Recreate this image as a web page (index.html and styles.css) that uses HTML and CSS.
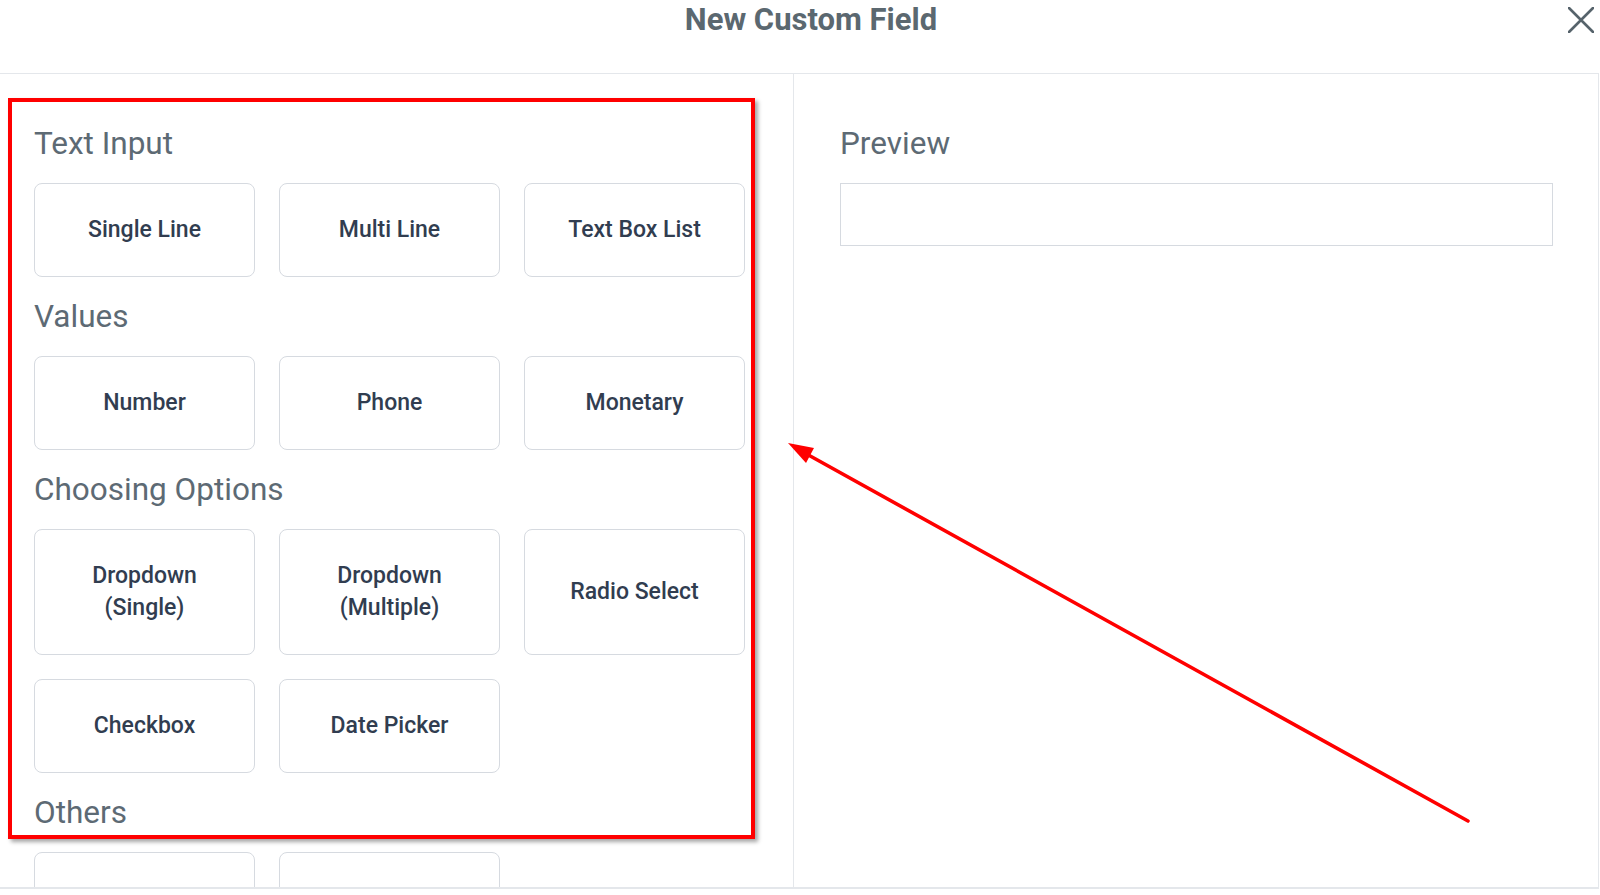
FILE: index.html
```html
<!DOCTYPE html>
<html lang="en">
<head>
<meta charset="utf-8">
<title>New Custom Field</title>
<link rel="stylesheet" href="styles.css">
</head>
<body>
<div class="modal">
  <header class="modal-header">
    <h1 class="modal-title">New Custom Field</h1>
    <button class="close-btn" aria-label="Close">
      <svg width="26" height="26" viewBox="0 0 26 26"><path d="M1 1 L25 25 M25 1 L1 25" stroke="#56636b" stroke-width="2.6" fill="none" stroke-linecap="round"/></svg>
    </button>
  </header>
  <div class="modal-body">
    <section class="types-panel">
      <h2 class="section-title">Text Input</h2>
      <div class="type-grid">
        <div class="type-btn">Single Line</div>
        <div class="type-btn">Multi Line</div>
        <div class="type-btn">Text Box List</div>
      </div>
      <h2 class="section-title">Values</h2>
      <div class="type-grid">
        <div class="type-btn">Number</div>
        <div class="type-btn">Phone</div>
        <div class="type-btn">Monetary</div>
      </div>
      <h2 class="section-title">Choosing Options</h2>
      <div class="type-grid">
        <div class="type-btn">Dropdown<br>(Single)</div>
        <div class="type-btn">Dropdown<br>(Multiple)</div>
        <div class="type-btn">Radio Select</div>
        <div class="type-btn">Checkbox</div>
        <div class="type-btn">Date Picker</div>
      </div>
      <h2 class="section-title">Others</h2>
      <div class="type-grid">
        <div class="type-btn type-btn-empty"></div>
        <div class="type-btn type-btn-empty"></div>
      </div>
    </section>
    <section class="preview-panel">
      <h2 class="section-title">Preview</h2>
      <div class="preview-box"></div>
    </section>
  </div>
</div>
<div class="highlight-box"></div>
<svg class="arrow-overlay" width="1600" height="895" viewBox="0 0 1600 895">
  <line x1="1468" y1="821" x2="803" y2="452" stroke="#ff0000" stroke-width="3.6" stroke-linecap="round"/>
  <polygon points="788,443 806,463 814,448" fill="#ff0000"/>
</svg>
</body>
</html>
```
FILE: styles.css
```css
* { box-sizing: border-box; }
html, body { margin: 0; padding: 0; background: #ffffff; }
body {
  font-family: Roboto, "Liberation Sans", Arial, sans-serif;
  width: 1600px;
  height: 895px;
  overflow: hidden;
  position: relative;
}
.modal { width: 1599px; }
.modal-header {
  position: relative;
  height: 74px;
  border-bottom: 1px solid #e4e7eb;
  display: flex;
  justify-content: center;
  align-items: flex-start;
  padding: 5px 0 0 23px;
}
.modal-title {
  margin: 0;
  font-size: 31px;
  line-height: 30px;
  font-weight: 700;
  color: #5b6870;
}
.close-btn {
  position: absolute;
  left: 1567px;
  top: 6px;
  width: 28px;
  height: 28px;
  padding: 1px;
  border: 0;
  background: transparent;
  display: flex;
}
.modal-body {
  display: flex;
  height: 815px;
  border-bottom: 2px solid #e4e7eb;
  overflow: hidden;
}
.types-panel {
  width: 794px;
  flex: none;
  border-right: 1px solid #e4e7eb;
  padding: 30px 0 0 34px;
}
.section-title {
  margin: 22px 0 21px;
  font-size: 31.5px;
  line-height: 36px;
  font-weight: 400;
  color: #5d6a74;
}
.type-grid {
  display: grid;
  grid-template-columns: repeat(3, 221px);
  gap: 24px;
}
.type-btn {
  display: flex;
  align-items: center;
  justify-content: center;
  min-height: 94px;
  border: 1px solid #d6dae0;
  border-radius: 8px;
  padding: 30px 8px;
  text-align: center;
  font-size: 23px;
  line-height: 32px;
  font-weight: 500;
  color: #313d50;
  background: #ffffff;
}
.preview-panel {
  flex: 1;
  border-right: 1px solid #e4e7eb;
  padding: 30px 45px 0 46px;
}
.preview-box {
  height: 63px;
  border: 1px solid #d6dae0;
}
.highlight-box {
  position: absolute;
  left: 8px;
  top: 98px;
  width: 747px;
  height: 741px;
  border: 4px solid #ff0000;
  box-shadow: 3px 3px 4px rgba(0, 0, 0, 0.35);
  pointer-events: none;
}
.arrow-overlay {
  position: absolute;
  left: 0;
  top: 0;
  pointer-events: none;
}
```
